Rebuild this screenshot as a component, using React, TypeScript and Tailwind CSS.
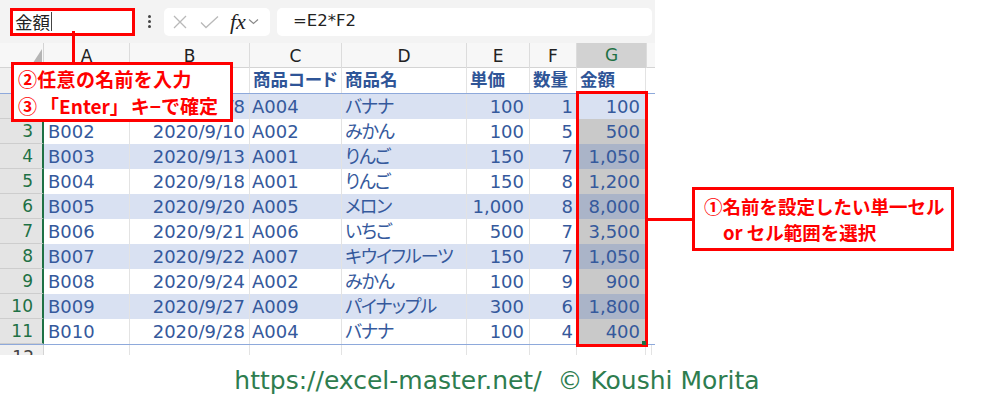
import React from "react";

const COLS = "grid grid-cols-[44px_86px_120px_92px_125px_63px_47px_69px_6px]";
const CELL_FONT = "font-['DejaVu_Sans','Noto_Sans_CJK_JP',sans-serif] [font-feature-settings:'palt']";

type Row = [string, string, string, string, string, string, string];

const rows: Row[] = [
  ["B001", "2020/9/8", "A004", "バナナ", "100", "1", "100"],
  ["B002", "2020/9/10", "A002", "みかん", "100", "5", "500"],
  ["B003", "2020/9/13", "A001", "りんご", "150", "7", "1,050"],
  ["B004", "2020/9/18", "A001", "りんご", "150", "8", "1,200"],
  ["B005", "2020/9/20", "A005", "メロン", "1,000", "8", "8,000"],
  ["B006", "2020/9/21", "A006", "いちご", "500", "7", "3,500"],
  ["B007", "2020/9/22", "A007", "キウイフルーツ", "150", "7", "1,050"],
  ["B008", "2020/9/24", "A002", "みかん", "100", "9", "900"],
  ["B009", "2020/9/27", "A009", "パイナップル", "300", "6", "1,800"],
  ["B010", "2020/9/28", "A004", "バナナ", "100", "4", "400"],
];

function FormulaBar() {
  return (
    <div className="h-[43px] bg-[#f3f3f3] flex items-center pl-[10px] pr-[3px]">
      {/* name box */}
      <div className="w-[125px] h-[28px] bg-white border-[3px] border-[#ff0000] flex items-center pl-[2px] text-[17.5px] text-[#222] font-['Noto_Sans_CJK_JP',sans-serif] leading-none">
        <span>金額</span>
        <span className="w-px h-[19px] bg-[#444] ml-px" />
      </div>
      <div className="w-[29px] flex flex-col items-center gap-[2px]">
        <span className="w-[3px] h-[3px] rounded-full bg-[#444]" />
        <span className="w-[3px] h-[3px] rounded-full bg-[#444]" />
        <span className="w-[3px] h-[3px] rounded-full bg-[#444]" />
      </div>
      <div className="w-[106px] h-[28px] bg-white rounded-[5px] flex items-center pl-[9px] gap-[13px]">
        <svg width="14" height="14" viewBox="0 0 14 14" fill="none" stroke="#b9b9b9" strokeWidth="1.3">
          <path d="M1 1L13 13M13 1L1 13" />
        </svg>
        <svg width="19" height="14" viewBox="0 0 19 14" fill="none" stroke="#b9b9b9" strokeWidth="1.3">
          <path d="M1 7.5L6 12.5L18 1.5" />
        </svg>
        <div className="flex items-center gap-[2px] -ml-[2px]">
          <span className="font-['Liberation_Serif',serif] italic text-[22px] text-[#222] leading-none">fx</span>
          <svg width="11" height="7" viewBox="0 0 11 7" fill="none" stroke="#8a8a8a" strokeWidth="1.2">
            <path d="M1 1.5L5.5 5.5L10 1.5" />
          </svg>
        </div>
      </div>
      <div className="ml-[7px] flex-1 h-[28px] bg-white rounded-[5px] flex items-center pl-[16px] text-[16.5px] text-[#222] font-['DejaVu_Sans',sans-serif]">
        =E2*F2
      </div>
    </div>
  );
}

function ColumnHeader() {
  const letters = ["A", "B", "C", "D", "E", "F"];
  return (
    <div className={`${COLS} h-[25px] bg-[#f7f7f7] border-b border-[#d4d4d4] text-[17px] text-[#222] font-['DejaVu_Sans',sans-serif]`}>
      <div className="relative border-r border-[#d4d4d4]">
        <svg className="absolute right-[1px] bottom-[2px]" width="13" height="20" viewBox="0 0 13 20">
          <path d="M13 0L13 20L0 20Z" fill="#b5b5b5" />
        </svg>
      </div>
      {letters.map((l) => (
        <div key={l} className="flex items-center justify-center border-r border-[#dcdcdc]">
          {l}
        </div>
      ))}
      <div className="flex items-center justify-center bg-[#d2d2d2] text-[#1e7145] border-b-2 border-[#1e7145]">G</div>
      <div className="border-l border-[#dcdcdc]" />
    </div>
  );
}

function TableHeaderRow() {
  const heads = ["売上ID", "日付", "商品コード", "商品名", "単価", "数量", "金額"];
  return (
    <div className={`${COLS} h-[26px] bg-white border-b border-[#8ea9db] ${CELL_FONT} text-[17.5px] font-bold text-[#2f5597]`}>
      <div className="bg-[#f0f0f0] border-r-2 border-[#1e7145]" />
      {heads.map((h) => (
        <div key={h} className="flex items-center px-[3px] border-r border-[#e3e3e3] overflow-hidden whitespace-nowrap">
          {h}
        </div>
      ))}
      <div />
    </div>
  );
}

function DataRow({ n, r }: { n: number; r: Row }) {
  const band = n % 2 === 0;
  const bg = band ? "bg-[#d9e1f2]" : "bg-white";
  const gBg = n === 2 ? "bg-[#d9e1f2]" : band ? "bg-[#aab4c8]" : "bg-[#c9c9c9]";
  return (
    <div className={`${COLS} h-[25px] ${CELL_FONT} text-[18px] text-[#35599c] leading-none`}>
      <div className="flex items-center justify-end pr-[9px] bg-[#e4e4e4] border-b border-[#cdcdcd] border-r-2 border-r-[#1e7145] text-[#1e7145] font-['DejaVu_Sans',sans-serif] text-[17px]">
        {n}
      </div>
      <div className={`${bg} flex items-center pl-[4px] border-r border-[#e3e3e3]`}>{r[0]}</div>
      <div className={`${bg} flex items-center justify-end pr-[4px] border-r border-[#e3e3e3]`}>{r[1]}</div>
      <div className={`${bg} flex items-center pl-[2px] border-r border-[#e3e3e3]`}>{r[2]}</div>
      <div className={`${bg} flex items-center pl-[3px] border-r border-[#e3e3e3] whitespace-nowrap tracking-[-1px]`}>{r[3]}</div>
      <div className={`${bg} flex items-center justify-end pr-[5px] border-r border-[#e3e3e3]`}>{r[4]}</div>
      <div className={`${bg} flex items-center justify-end pr-[3px] border-r border-[#e3e3e3]`}>{r[5]}</div>
      <div className={`${gBg} flex items-center justify-end pr-[6px]`}>{r[6]}</div>
      <div className="bg-white border-l border-[#e3e3e3]" />
    </div>
  );
}

function PartialRow() {
  return (
    <div className="h-[11px] overflow-hidden border-t border-[#8ea9db]">
      <div className={`${COLS} h-[25px] font-['DejaVu_Sans',sans-serif] text-[17px] text-[#444]`}>
        <div className="flex items-center justify-end pr-[9px] bg-[#f0f0f0] border-r border-[#d4d4d4]">12</div>
        {[0, 1, 2, 3, 4, 5, 6, 7].map((i) => (
          <div key={i} className="border-r border-[#e3e3e3] bg-white" />
        ))}
      </div>
    </div>
  );
}

export default function App() {
  return (
    <div className="w-[1000px] h-[399px] bg-white relative overflow-hidden">
      <div className="w-[655px] h-[355px] flex flex-col overflow-hidden">
        <FormulaBar />
        <ColumnHeader />
        <TableHeaderRow />
        {rows.map((r, i) => (
          <DataRow key={i} n={i + 2} r={r} />
        ))}
        <PartialRow />
      </div>

      <div className="h-[44px] flex items-center justify-center pt-[6px] pr-[6px]">
        <span className="whitespace-pre text-[25px] leading-none text-[#2e7d4f] font-['DejaVu_Sans',sans-serif]">
          https://excel-master.net/  © Koushi Morita
        </span>
      </div>

      {/* selected range highlight */}
      <div className="absolute left-[576px] top-[91px] w-[72px] h-[256px] border-[3px] border-[#ff0000]" />
      <div className="absolute left-[642px] top-[341px] w-[4px] h-[4px] bg-[#1e7145]" />

      {/* callout: name box */}
      <div className="absolute left-[72px] top-[31px] w-[3px] h-[32px] bg-[#ff0000]" />
      <div className="absolute left-[11px] top-[62px] w-[222px] h-[60px] bg-white border-[3px] border-[#ff0000] flex flex-col justify-center pl-[4px] font-['Noto_Sans_CJK_JP',sans-serif] font-bold text-[19px] text-[#ff0000] leading-[27px] whitespace-nowrap">
        <div className="tracking-[0.3px]">②任意の名前を入力</div>
        <div className="flex">
          <span>③</span>
          <span className="ml-[3px]">「Enter」</span>
          <span className="ml-[2px]">キ−で確定</span>
        </div>
      </div>

      {/* callout: range */}
      <div className="absolute left-[648px] top-[218px] w-[45px] h-[3px] bg-[#ff0000]" />
      <div className="absolute left-[692px] top-[187px] w-[262px] h-[64px] bg-white border-[3px] border-[#ff0000] flex flex-col justify-center pl-[9px] font-['Noto_Sans_CJK_JP',sans-serif] font-bold text-[18.5px] text-[#ff0000] leading-[26px] whitespace-nowrap">
        <div>①名前を設定したい単一セル</div>
        <div className="pl-[19px]">or セル範囲を選択</div>
      </div>
    </div>
  );
}
